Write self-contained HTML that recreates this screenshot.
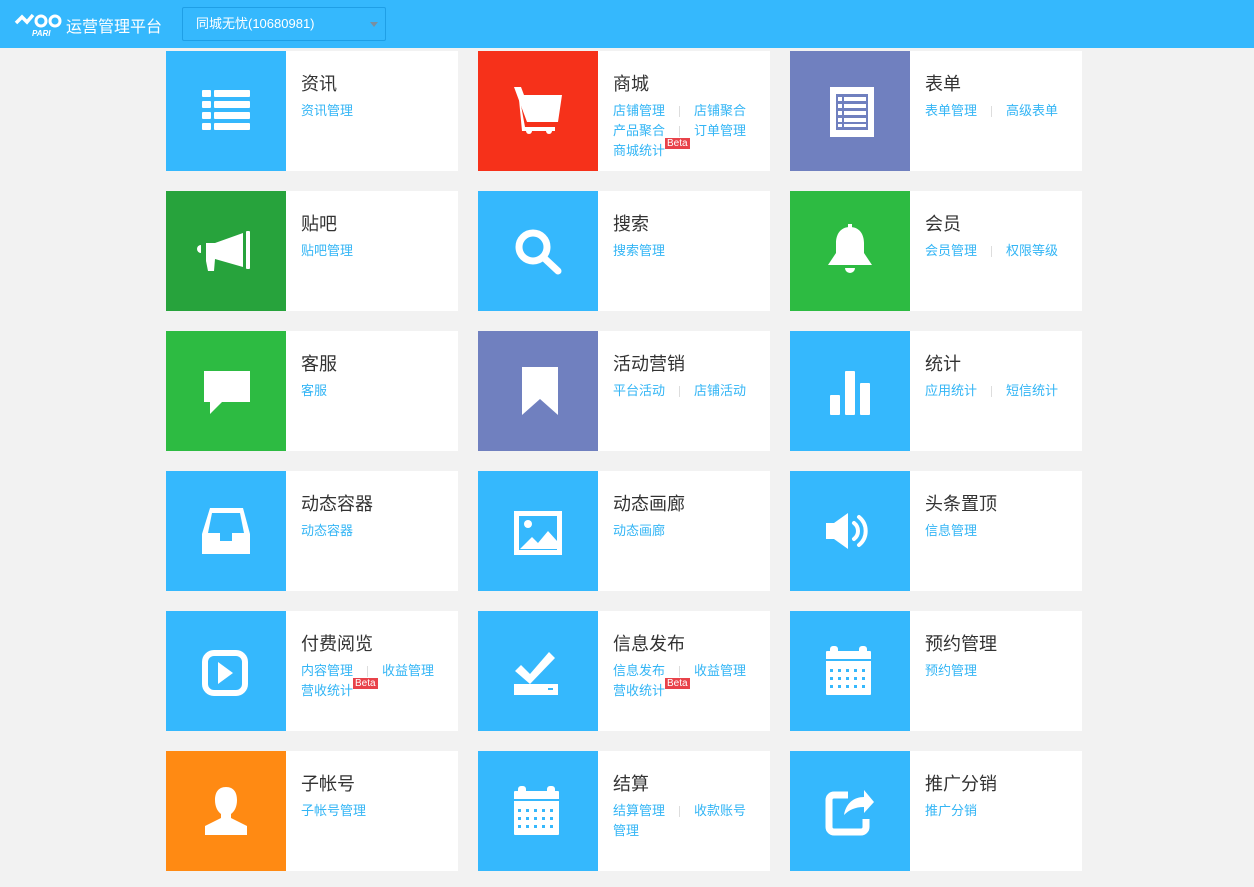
<!DOCTYPE html>
<html><head><meta charset="utf-8"><style>
*{margin:0;padding:0;box-sizing:border-box}
body{width:1254px;height:887px;background:#f2f2f2;font-family:"Liberation Sans","Noto Sans CJK SC",sans-serif;position:relative;overflow:hidden}
.hd{position:absolute;left:0;top:0;width:1254px;height:48px;background:#35b8fd}
.logo{position:absolute;left:14px;top:11px}
.ttl{position:absolute;left:66px;top:13px;color:#fff;font-size:16px}
.sel{position:absolute;left:182px;top:7px;width:204px;height:34px;border:1px solid #1f9fe6;border-radius:2px;color:#fff;font-size:13px;line-height:32px;padding-left:13px}
.sel:after{content:"";position:absolute;right:7px;top:14px;border:4px solid transparent;border-top:5px solid #7a8fa0}
.c{position:absolute;width:292px;height:120px;background:#fff}
.ic{position:absolute;left:0;top:0;width:120px;height:120px}
.ic svg{display:block}
.t{position:absolute;left:135px;top:19px;font-size:18px;color:#333}
.l{position:absolute;left:135px;top:50px;width:170px;font-size:13px;line-height:20px;color:#33b5f5}
.l span{display:inline-block;width:81px;position:relative;white-space:nowrap}
.l span.s:after{content:"";position:absolute;left:66px;top:5px;width:1px;height:11px;background:#ddd}
.b{display:inline-block;background:#e8424a;color:#fff;font-size:10px;line-height:11px;padding:0 2px;vertical-align:top;margin-top:-3px;font-style:normal}
</style></head><body>
<div class="hd">
<svg class="logo" width="50" height="26" viewBox="0 0 50 26"><path d="M2 12 L8 6 L13 11 L19 4" stroke="#fff" stroke-width="3.5" fill="none"/><circle cx="27" cy="10" r="5" stroke="#fff" stroke-width="3" fill="none"/><circle cx="41" cy="10" r="5" stroke="#fff" stroke-width="3" fill="none"/><text x="18" y="25" font-size="8" font-style="italic" font-weight="bold" fill="#fff" font-family="Liberation Sans">PARI</text></svg>
<div class="ttl">运营管理平台</div>
<div class="sel">同城无忧(10680981)</div>
</div>

<div class="c" style="left:166px;top:51px"><div class="ic" style="background:#35b8fd"><svg width="120" height="120"><g fill="#fff"><rect x="36" y="39" width="9" height="7" rx="1"/><rect x="48" y="39" width="36" height="7" rx="1"/><rect x="36" y="50" width="9" height="7" rx="1"/><rect x="48" y="50" width="36" height="7" rx="1"/><rect x="36" y="61" width="9" height="7" rx="1"/><rect x="48" y="61" width="36" height="7" rx="1"/><rect x="36" y="72" width="9" height="7" rx="1"/><rect x="48" y="72" width="36" height="7" rx="1"/></g></svg></div><div class="t">资讯</div><div class="l"><span>资讯管理</span></div></div>
<div class="c" style="left:478px;top:51px"><div class="ic" style="background:#f6311a"><svg width="120" height="120"><g fill="#fff"><path d="M36 36h7l3 8h38l-4 27H49z"/><path d="M40 38l7 38h30v4H44z"/><circle cx="51" cy="80" r="3"/><circle cx="71" cy="80" r="3"/></g></svg></div><div class="t">商城</div><div class="l"><span class="s">店铺管理</span><span>店铺聚合</span><span class="s">产品聚合</span><span>订单管理</span><span>商城统计<i class="b">Beta</i></span></div></div>
<div class="c" style="left:790px;top:51px"><div class="ic" style="background:#7080bf"><svg width="120" height="120"><rect x="40" y="36" width="44" height="50" fill="#fff"/><g fill="#7080bf"><rect x="46" y="43" width="32" height="36"/></g><g fill="#fff"><rect x="48" y="46" width="4" height="4"/><rect x="54" y="46" width="22" height="4"/><rect x="48" y="53" width="4" height="4"/><rect x="54" y="53" width="22" height="4"/><rect x="48" y="60" width="4" height="4"/><rect x="54" y="60" width="22" height="4"/><rect x="48" y="67" width="4" height="4"/><rect x="54" y="67" width="22" height="4"/><rect x="48" y="73" width="4" height="3"/><rect x="54" y="73" width="22" height="3"/></g></svg></div><div class="t">表单</div><div class="l"><span class="s">表单管理</span><span>高级表单</span></div></div>

<div class="c" style="left:166px;top:191px"><div class="ic" style="background:#27a33c"><svg width="120" height="120"><g fill="#fff"><path d="M35 54a4 4 0 0 0 0 8z"/><path d="M40 52h9l28-10v34L49 68l-1 12h-6l-2-10z"/><rect x="80" y="40" width="4" height="38" rx="1"/></g></svg></div><div class="t">贴吧</div><div class="l"><span>贴吧管理</span></div></div>
<div class="c" style="left:478px;top:191px"><div class="ic" style="background:#35b8fd"><svg width="120" height="120"><circle cx="55" cy="56" r="14" stroke="#fff" stroke-width="7" fill="none"/><path d="M65 66l15 14" stroke="#fff" stroke-width="7" stroke-linecap="round"/></svg></div><div class="t">搜索</div><div class="l"><span>搜索管理</span></div></div>
<div class="c" style="left:790px;top:191px"><div class="ic" style="background:#2dbb42"><svg width="120" height="120"><g fill="#fff"><path d="M60 36c-10 0-14 8-14 16v10l-8 12h44l-8-12V52c0-8-4-16-14-16z"/><rect x="58" y="33" width="4" height="5"/><path d="M55 77a5 5 0 0 0 10 0z"/></g></svg></div><div class="t">会员</div><div class="l"><span class="s">会员管理</span><span>权限等级</span></div></div>

<div class="c" style="left:166px;top:331px"><div class="ic" style="background:#2dbb42"><svg width="120" height="120"><path d="M38 40h46v31H56l-12 12V71h-6z" fill="#fff"/></svg></div><div class="t">客服</div><div class="l"><span>客服</span></div></div>
<div class="c" style="left:478px;top:331px"><div class="ic" style="background:#7080bf"><svg width="120" height="120"><path d="M44 36h36v48L62 68 44 84z" fill="#fff"/></svg></div><div class="t">活动营销</div><div class="l"><span class="s">平台活动</span><span>店铺活动</span></div></div>
<div class="c" style="left:790px;top:331px"><div class="ic" style="background:#35b8fd"><svg width="120" height="120"><g fill="#fff"><rect x="40" y="64" width="10" height="20" rx="1"/><rect x="55" y="40" width="10" height="44" rx="1"/><rect x="70" y="52" width="10" height="32" rx="1"/></g></svg></div><div class="t">统计</div><div class="l"><span class="s">应用统计</span><span>短信统计</span></div></div>

<div class="c" style="left:166px;top:471px"><div class="ic" style="background:#35b8fd"><svg width="120" height="120"><path d="M44 37h33l7 26v20H36V63zM46 42l-4 20h12v8h12v-8h12l-4-20z" fill="#fff" fill-rule="evenodd"/></svg></div><div class="t">动态容器</div><div class="l"><span>动态容器</span></div></div>
<div class="c" style="left:478px;top:471px"><div class="ic" style="background:#35b8fd"><svg width="120" height="120"><path d="M36 40h48v44H36z M41 45v34h38V45z" fill="#fff" fill-rule="evenodd"/><circle cx="50" cy="53" r="4" fill="#fff"/><path d="M42 78l12-12 6 6 10-12 9 10v8z" fill="#fff"/></svg></div><div class="t">动态画廊</div><div class="l"><span>动态画廊</span></div></div>
<div class="c" style="left:790px;top:471px"><div class="ic" style="background:#35b8fd"><svg width="120" height="120"><path d="M36 52h8l14-10v36L44 68h-8z" fill="#fff"/><path d="M64 52a10 10 0 0 1 0 16M69 46a18 18 0 0 1 0 28" stroke="#fff" stroke-width="4" fill="none" stroke-linecap="round"/></svg></div><div class="t">头条置顶</div><div class="l"><span>信息管理</span></div></div>

<div class="c" style="left:166px;top:611px"><div class="ic" style="background:#35b8fd"><svg width="120" height="120"><rect x="39" y="42" width="40" height="40" rx="9" stroke="#fff" stroke-width="6" fill="none"/><path d="M52 51v22l15-11z" fill="#fff"/></svg></div><div class="t">付费阅览</div><div class="l"><span class="s">内容管理</span><span>收益管理</span><span>营收统计<i class="b">Beta</i></span></div></div>
<div class="c" style="left:478px;top:611px"><div class="ic" style="background:#35b8fd"><svg width="120" height="120"><path d="M43 54l9 9 19-22 6 6-25 26-15-13z" fill="#fff"/><rect x="36" y="73" width="44" height="11" fill="#fff"/><rect x="70" y="77" width="5" height="2" fill="#35b8fd"/></svg></div><div class="t">信息发布</div><div class="l"><span class="s">信息发布</span><span>收益管理</span><span>营收统计<i class="b">Beta</i></span></div></div>
<div class="c" style="left:790px;top:611px"><div class="ic" style="background:#35b8fd"><svg width="120" height="120"><g fill="#fff"><rect x="36" y="40" width="45" height="44" rx="1"/><rect x="40" y="35" width="8" height="8" rx="3"/><rect x="69" y="35" width="8" height="8" rx="3"/></g><rect x="36" y="48" width="45" height="2" fill="#35b8fd"/><g fill="#35b8fd"><rect x="40" y="58" width="3" height="3"/><rect x="48" y="58" width="3" height="3"/><rect x="56" y="58" width="3" height="3"/><rect x="64" y="58" width="3" height="3"/><rect x="72" y="58" width="3" height="3"/><rect x="40" y="66" width="3" height="3"/><rect x="48" y="66" width="3" height="3"/><rect x="56" y="66" width="3" height="3"/><rect x="64" y="66" width="3" height="3"/><rect x="72" y="66" width="3" height="3"/><rect x="40" y="74" width="3" height="3"/><rect x="48" y="74" width="3" height="3"/><rect x="56" y="74" width="3" height="3"/><rect x="64" y="74" width="3" height="3"/><rect x="72" y="74" width="3" height="3"/></g></svg></div><div class="t">预约管理</div><div class="l"><span>预约管理</span></div></div>

<div class="c" style="left:166px;top:751px"><div class="ic" style="background:#ff8a13"><svg width="120" height="120"><path d="M60 36c-8 0-11 6-11 13 0 6 2 11 6 14v4l-16 8v9h42v-9l-16-8v-4c4-3 6-8 6-14 0-7-3-13-11-13z" fill="#fff"/></svg></div><div class="t">子帐号</div><div class="l"><span>子帐号管理</span></div></div>
<div class="c" style="left:478px;top:751px"><div class="ic" style="background:#35b8fd"><svg width="120" height="120"><g fill="#fff"><rect x="36" y="40" width="45" height="44" rx="1"/><rect x="40" y="35" width="8" height="8" rx="3"/><rect x="69" y="35" width="8" height="8" rx="3"/></g><rect x="36" y="48" width="45" height="2" fill="#35b8fd"/><g fill="#35b8fd"><rect x="40" y="58" width="3" height="3"/><rect x="48" y="58" width="3" height="3"/><rect x="56" y="58" width="3" height="3"/><rect x="64" y="58" width="3" height="3"/><rect x="72" y="58" width="3" height="3"/><rect x="40" y="66" width="3" height="3"/><rect x="48" y="66" width="3" height="3"/><rect x="56" y="66" width="3" height="3"/><rect x="64" y="66" width="3" height="3"/><rect x="72" y="66" width="3" height="3"/><rect x="40" y="74" width="3" height="3"/><rect x="48" y="74" width="3" height="3"/><rect x="56" y="74" width="3" height="3"/><rect x="64" y="74" width="3" height="3"/><rect x="72" y="74" width="3" height="3"/></g></svg></div><div class="t">结算</div><div class="l"><span class="s">结算管理</span><span>收款账号</span><span>管理</span></div></div>
<div class="c" style="left:790px;top:751px"><div class="ic" style="background:#35b8fd"><svg width="120" height="120"><path d="M58 44H44a5 5 0 0 0-5 5v27a5 5 0 0 0 5 5h27a5 5 0 0 0 5-5v-8" stroke="#fff" stroke-width="7" fill="none" stroke-linejoin="round"/><path d="M54 64c2-12 10-18 20-18v-7l10 12-10 11v-6c-9 0-15 3-20 8z" fill="#fff"/></svg></div><div class="t">推广分销</div><div class="l"><span>推广分销</span></div></div>
</body></html>
